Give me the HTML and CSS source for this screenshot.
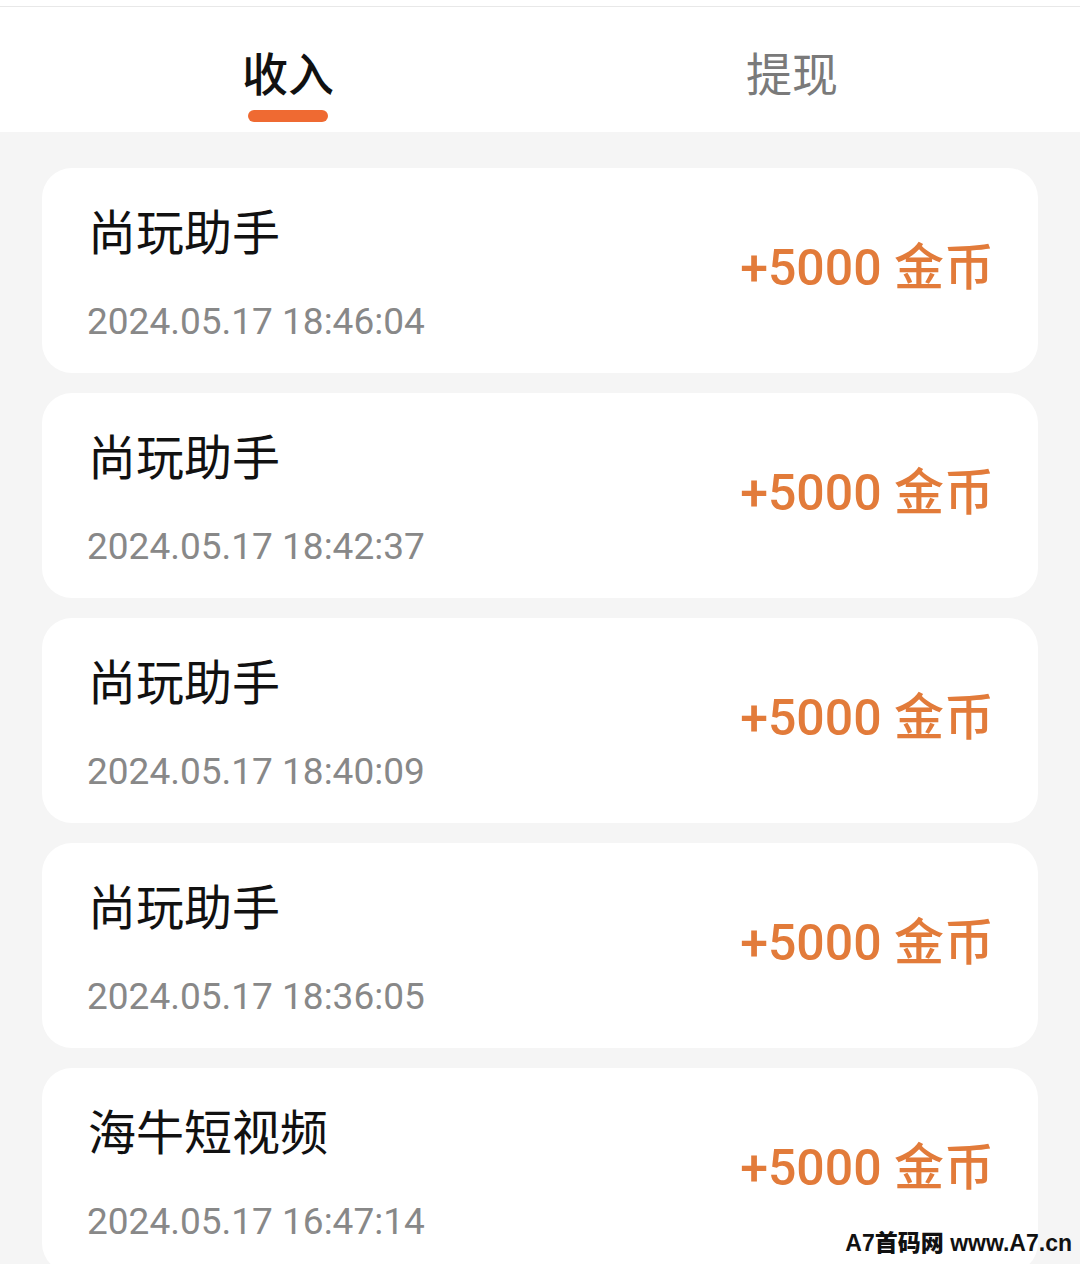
FILE: index.html
```html
<!DOCTYPE html>
<html lang="zh-CN">
<head>
<meta charset="utf-8">
<title>收入</title>
<link rel="stylesheet" href="styles.css">
</head>
<body>
<div class="topbar"></div>
<header class="tabs">
  <div class="tab active"><span class="tab-label">收入</span><span class="tab-bar"></span></div>
  <div class="tab"><span class="tab-label">提现</span></div>
</header>
<main class="list">
  <div class="card">
    <div class="info"><div class="title">尚玩助手</div><div class="date">2024.05.17 18:46:04</div></div>
    <div class="amount">+5000 金币</div>
  </div>
  <div class="card">
    <div class="info"><div class="title">尚玩助手</div><div class="date">2024.05.17 18:42:37</div></div>
    <div class="amount">+5000 金币</div>
  </div>
  <div class="card">
    <div class="info"><div class="title">尚玩助手</div><div class="date">2024.05.17 18:40:09</div></div>
    <div class="amount">+5000 金币</div>
  </div>
  <div class="card">
    <div class="info"><div class="title">尚玩助手</div><div class="date">2024.05.17 18:36:05</div></div>
    <div class="amount">+5000 金币</div>
  </div>
  <div class="card">
    <div class="info"><div class="title">海牛短视频</div><div class="date">2024.05.17 16:47:14</div></div>
    <div class="amount">+5000 金币</div>
  </div>
</main>
<div class="watermark">A7首码网 www.A7.cn</div>
</body>
</html>
```

FILE: styles.css
```css
html, body {
  margin: 0;
  padding: 0;
}
body {
  background: #f5f5f5;
  font-family: "Noto Sans CJK SC", "Noto Sans", sans-serif;
  height: 1264px;
  overflow: hidden;
  position: relative;
}
.topbar {
  height: 6px;
  background: #ffffff;
  border-bottom: 1px solid #e8e8e8;
}
.tabs {
  background: #ffffff;
  height: 125px;
  display: grid;
  grid-template-columns: 1fr 1fr;
  padding: 0 36px;
}
.tab {
  display: flex;
  flex-direction: column;
  align-items: center;
  padding-top: 34px;
}
.tab-label {
  font-size: 46px;
  line-height: 60px;
  color: #7a7a7a;
}
.tab.active .tab-label {
  color: #111111;
  font-weight: 500;
}
.tab-bar {
  margin-top: 9px;
  width: 80px;
  height: 12px;
  border-radius: 6px;
  background: #ef6a32;
}
.list {
  padding: 36px 42px 0;
  display: flex;
  flex-direction: column;
  gap: 20px;
}
.card {
  background: #ffffff;
  border-radius: 30px;
  height: 205px;
  box-sizing: border-box;
  padding: 0 44px 0 46px;
  display: flex;
  align-items: center;
  justify-content: space-between;
  flex-shrink: 0;
}
.info {
  display: flex;
  flex-direction: column;
  align-self: stretch;
  padding-top: 31px;
}
.title {
  font-size: 48px;
  line-height: 60px;
  color: #111111;
}
.date {
  margin-top: 43px;
  font-family: Roboto, "Noto Sans", sans-serif;
  font-size: 37px;
  line-height: 40px;
  color: #888888;
  margin-left: -1px;
}
.amount {
  font-family: Roboto, "Noto Sans CJK SC", sans-serif;
  font-size: 50px;
  font-weight: 500;
  color: #e27b3a;
  padding-bottom: 16px;
  white-space: nowrap;
}
.watermark {
  position: absolute;
  right: 8px;
  bottom: 6px;
  font-family: "Liberation Sans", "Noto Sans CJK SC", sans-serif;
  font-weight: 900;
  font-size: 23px;
  color: #111111;
}
```
